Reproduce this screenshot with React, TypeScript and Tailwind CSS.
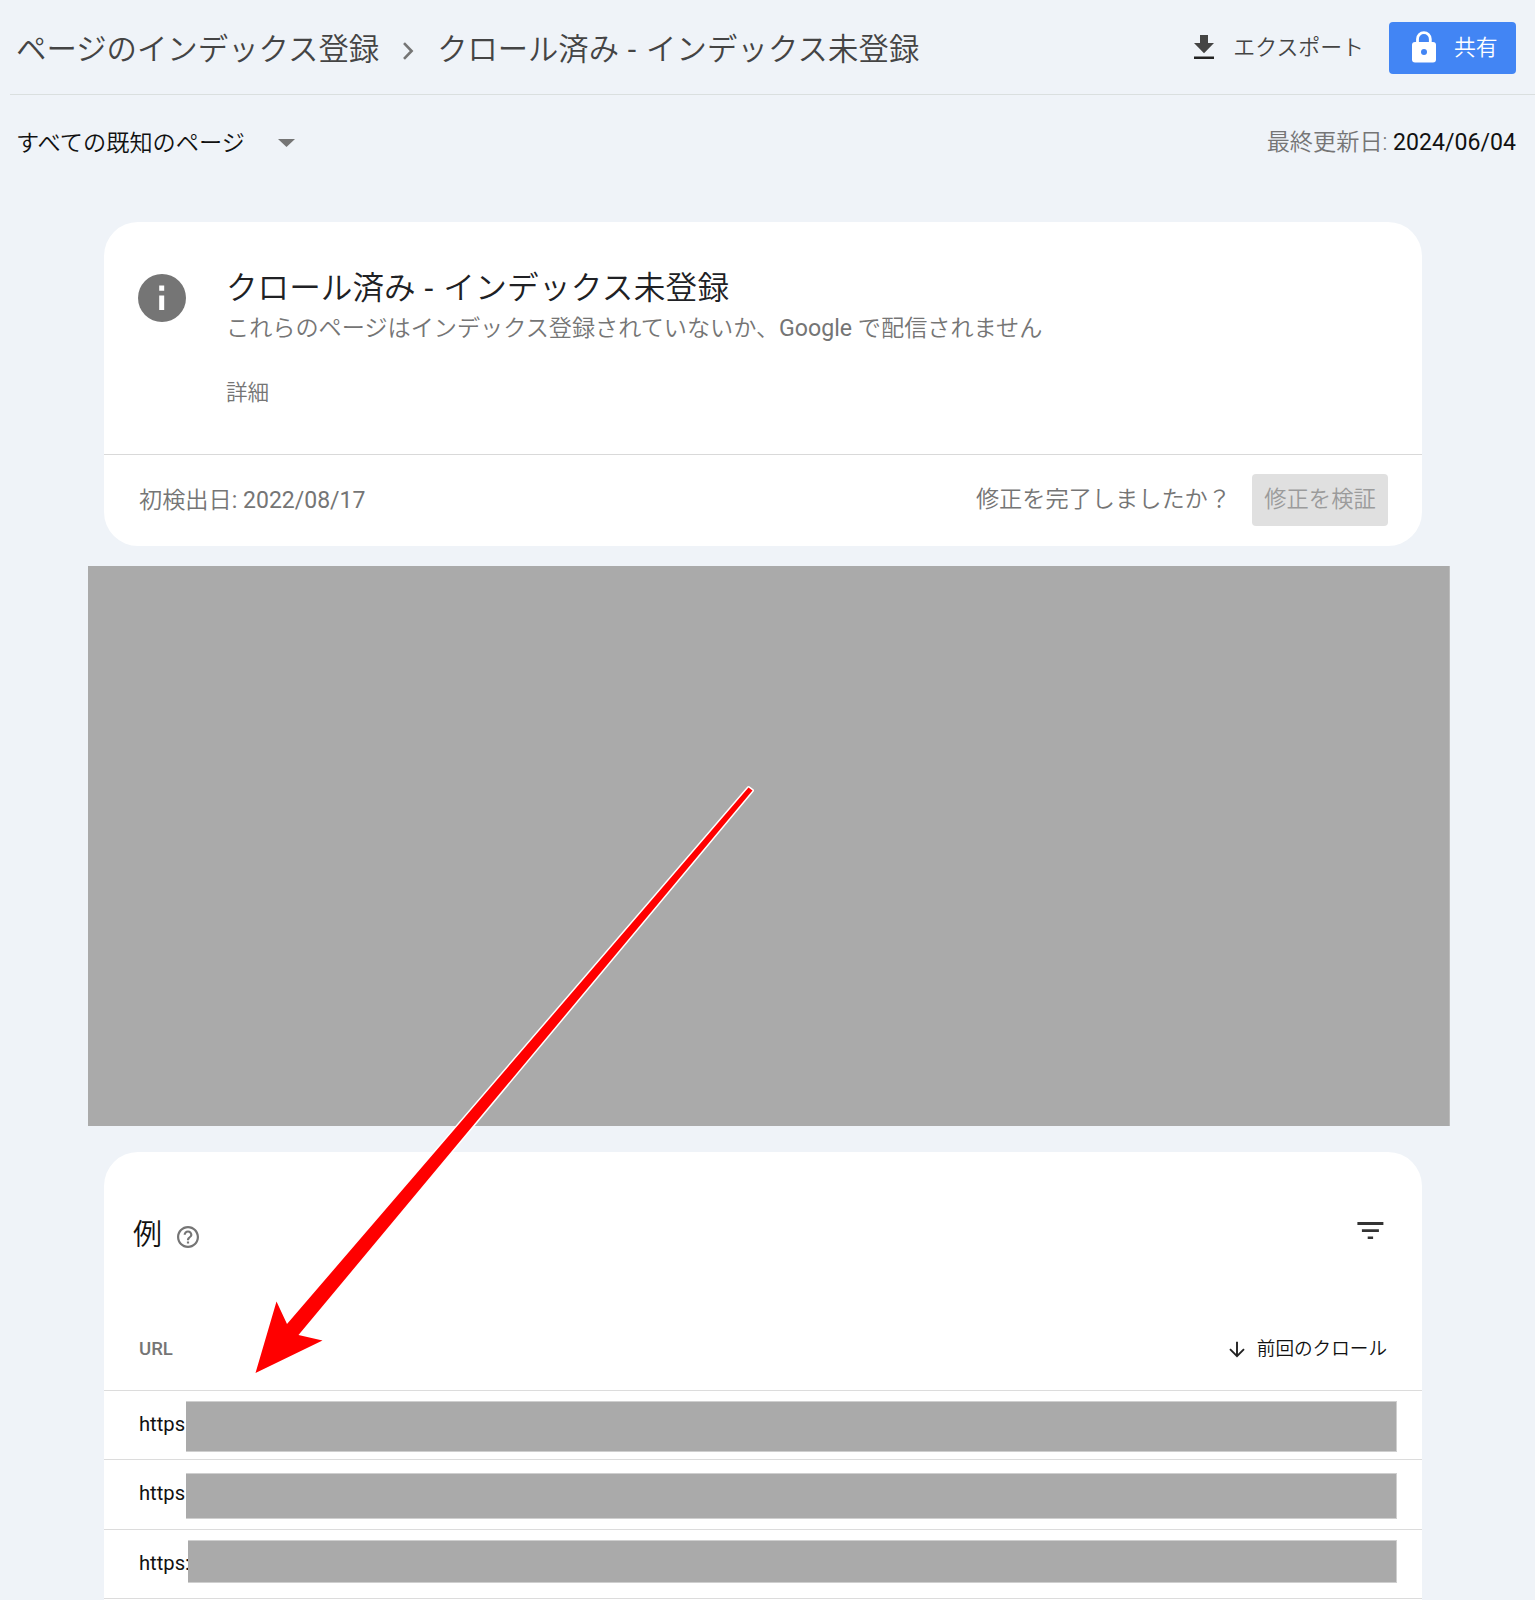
const FONT = "font-['Roboto','Noto_Sans_CJK_JP',sans-serif]";

const rows = [
  { label: 'https', height: 'h-[69px]', bar: 'ml-0 mt-[10px] h-[51px]' },
  { label: 'https', height: 'h-[70px]', bar: 'ml-0 mt-[13px] h-[46px]' },
  { label: 'https:', height: 'h-[69px]', bar: 'ml-[2px] mt-[10px] h-[43px]' },
];

function Header() {
  return (
    <header className="ml-[10px] flex h-[95px] items-start border-b border-[#dadfdf] pl-[6px] text-[#444]">
      <span className="mt-[30px] text-[30.4px] leading-[40px]">ページのインデックス登録</span>
      <svg className="ml-[23px] mt-[42px] h-[18px] w-[12px]" viewBox="0 0 12 18" fill="none" stroke="#757575" strokeWidth="2.6">
        <path d="M2 1.2 9.6 9 2 16.8" />
      </svg>
      <span className="ml-[23px] mt-[30px] text-[30.3px] leading-[40px]">クロール済み<span className="font-normal tracking-[1.2px]"> - </span><span className="tracking-[0.2px]">インデックス未登録</span></span>
      <svg className="ml-auto mt-[34px] h-[26px] w-[20px]" viewBox="0 0 20 26" fill="#444">
        <path d="M6 1h8v8h6L10 19.3 0 9h6z" />
        <path d="M0 22.5h20V25H0z" fill="#222" />
      </svg>
      <span className="ml-[19px] mt-[33px] text-[21.9px] leading-[30px]">エクスポート</span>
      <button className="ml-[25px] mr-[19px] mt-[22px] flex h-[52px] w-[127px] items-start rounded-[4px] bg-[#4285f4] text-white">
        <svg className="ml-[23px] mt-[9px] h-[32px] w-[24px]" viewBox="0 0 24 32">
          <path d="M5.5 12V8a6.4 6.4 0 0 1 12.8 0v4" fill="none" stroke="white" strokeWidth="2.8" />
          <rect y="11" width="24" height="20.5" rx="3" fill="white" />
          <circle cx="12" cy="21" r="3" fill="#4285f4" />
        </svg>
        <span className="ml-[18px] mt-[11px] text-[21.8px] leading-[30px]">共有</span>
      </button>
    </header>
  );
}

function StatusCard() {
  return (
    <section className="ml-[104px] mt-[47px] h-[324px] w-[1318px] rounded-[34px] bg-white text-[#757575]">
      <div className="flex h-[233px] border-b border-[#d9d9d9] pl-[34px]">
        <svg className="mt-[52px] h-[48px] w-[48px]" viewBox="0 0 48 48">
          <circle cx="24" cy="24" r="24" fill="#757575" />
          <path d="M21.2 11.5h5v5.2h-5zM21.2 21.5h5V36h-5z" fill="white" />
        </svg>
        <div className="ml-[40px] flex flex-col">
          <h2 className="mt-[46px] text-[31.6px] leading-[42px] text-[#202124]">クロール済み<span className="font-normal tracking-[1.1px]"> - </span><span className="tracking-[0.3px]">インデックス未登録</span></h2>
          <p className="mt-[2px] text-[23.15px] leading-[34px]">これらのページはインデックス登録されていないか、<span className="font-normal">Google </span>で配信されません</p>
          <a className="mt-[31px] text-[21.6px] leading-[32px]">詳細</a>
        </div>
      </div>
      <div className="flex h-[91px] items-start pl-[35px] pr-[34px] text-[23.2px] leading-[34px]">
        <span className="mt-[28px]">初検出日<span className="font-normal text-[23px]">: 2022/08/17</span></span>
        <span className="ml-auto mt-[27px]">修正を完了しましたか？</span>
        <button className="ml-[21px] mt-[19px] flex h-[52px] w-[136px] justify-center rounded-[4px] bg-[#e0e0e0] pt-[8px] text-[22.3px] leading-[34px] text-[#9b9b9b]">
          修正を検証
        </button>
      </div>
    </section>
  );
}

function ExamplesCard() {
  return (
    <section className="ml-[104px] mt-[26px] h-[448px] w-[1318px] overflow-hidden rounded-t-[34px] bg-white text-[#111]">
      <div className="flex h-[168px] items-start pl-[29px] pr-[38px]">
        <h2 className="mt-[63px] text-[29px] leading-[40px]">例</h2>
        <svg className="ml-[15px] mt-[74px] h-[22px] w-[22px]" viewBox="2 2 20 20" fill="#757575">
          <path d="M11 18h2v-2h-2v2zm1-16C6.48 2 2 6.48 2 12s4.48 10 10 10 10-4.48 10-10S17.52 2 12 2zm0 18c-4.41 0-8-3.59-8-8s3.59-8 8-8 8 3.59 8 8-3.59 8-8 8zm0-14c-2.21 0-4 1.79-4 4h2c0-1.1.9-2 2-2s2 .9 2 2c0 2-3 1.75-3 5h2c0-2.25 3-2.5 3-5 0-2.21-1.79-4-4-4z" />
        </svg>
        <svg className="ml-auto mt-[70px] h-[18px] w-[27px]" viewBox="0 0 27 18" fill="#333">
          <path d="M.4 0h26v3H.4zM4.9 7.2h17V10h-17zM10.7 14.4h5.4V17h-5.4z" />
        </svg>
      </div>
      <div className="flex h-[71px] items-start border-b border-[#dcdcdc] pl-[35px] pr-[35px]">
        <span className="mt-[14px] text-[18.6px] font-medium leading-[30px] text-[#757575]">URL</span>
        <svg className="ml-auto mt-[21px] h-[17px] w-[16px]" viewBox="0 0 16 17" fill="none" stroke="#222" strokeWidth="1.9">
          <path d="M8 .8v14M1 8.2l7 7 7-7" />
        </svg>
        <span className="ml-[12px] mt-[14px] text-[18.6px] leading-[30px]">前回のクロール</span>
      </div>
      {rows.map((row, i) => (
        <div key={i} className={`flex items-start border-b border-[#dcdcdc] pl-[35px] pr-[25px] ${row.height}`}>
          <span className="mt-[18px] w-[47px] text-[20.2px] font-normal leading-[30px]">{row.label}</span>
          <div className={`relative min-w-0 flex-1 border-y border-r border-[#cfcfcf] bg-[#aaa] ${row.bar}`} />
        </div>
      ))}
    </section>
  );
}

export default function App() {
  return (
    <div className={`relative h-[1600px] w-[1535px] overflow-hidden whitespace-nowrap bg-[#eff3f8] font-[350] ${FONT}`}>
      <Header />
      <div className="flex h-[80px] items-start pl-[16px] pr-[19px] text-[23.2px] leading-[34px]">
        <span className="mt-[31px] text-[#111]">すべての既知のページ</span>
        <svg className="ml-[31px] mt-[44px] h-[8px] w-[17px] translate-x-[2px]" viewBox="0 0 17 8" fill="#757575">
          <path d="M0 0h17L8.5 8z" />
        </svg>
        <span className="ml-auto mt-[30px] text-[#757575]">
          最終更新日: <span className="font-normal text-[23.1px] text-[#111]">2024/06/04</span>
        </span>
      </div>
      <StatusCard />
      <div className="ml-[88px] mt-[20px] h-[560px] w-[1362px] border-r border-[#bcbcbc] bg-[#aaa]" />
      <ExamplesCard />
      <svg className="absolute left-[240px] top-[770px] h-[620px] w-[530px]" viewBox="240 770 530 620">
        <path d="M255.5 1373 276.5 1301.5 287 1324 748.5 787.5 752.5 790.5 298.5 1335 322.5 1340.5Z" fill="#f00" stroke="white" strokeWidth="3" strokeLinejoin="round" paintOrder="stroke" />
      </svg>
    </div>
  );
}
